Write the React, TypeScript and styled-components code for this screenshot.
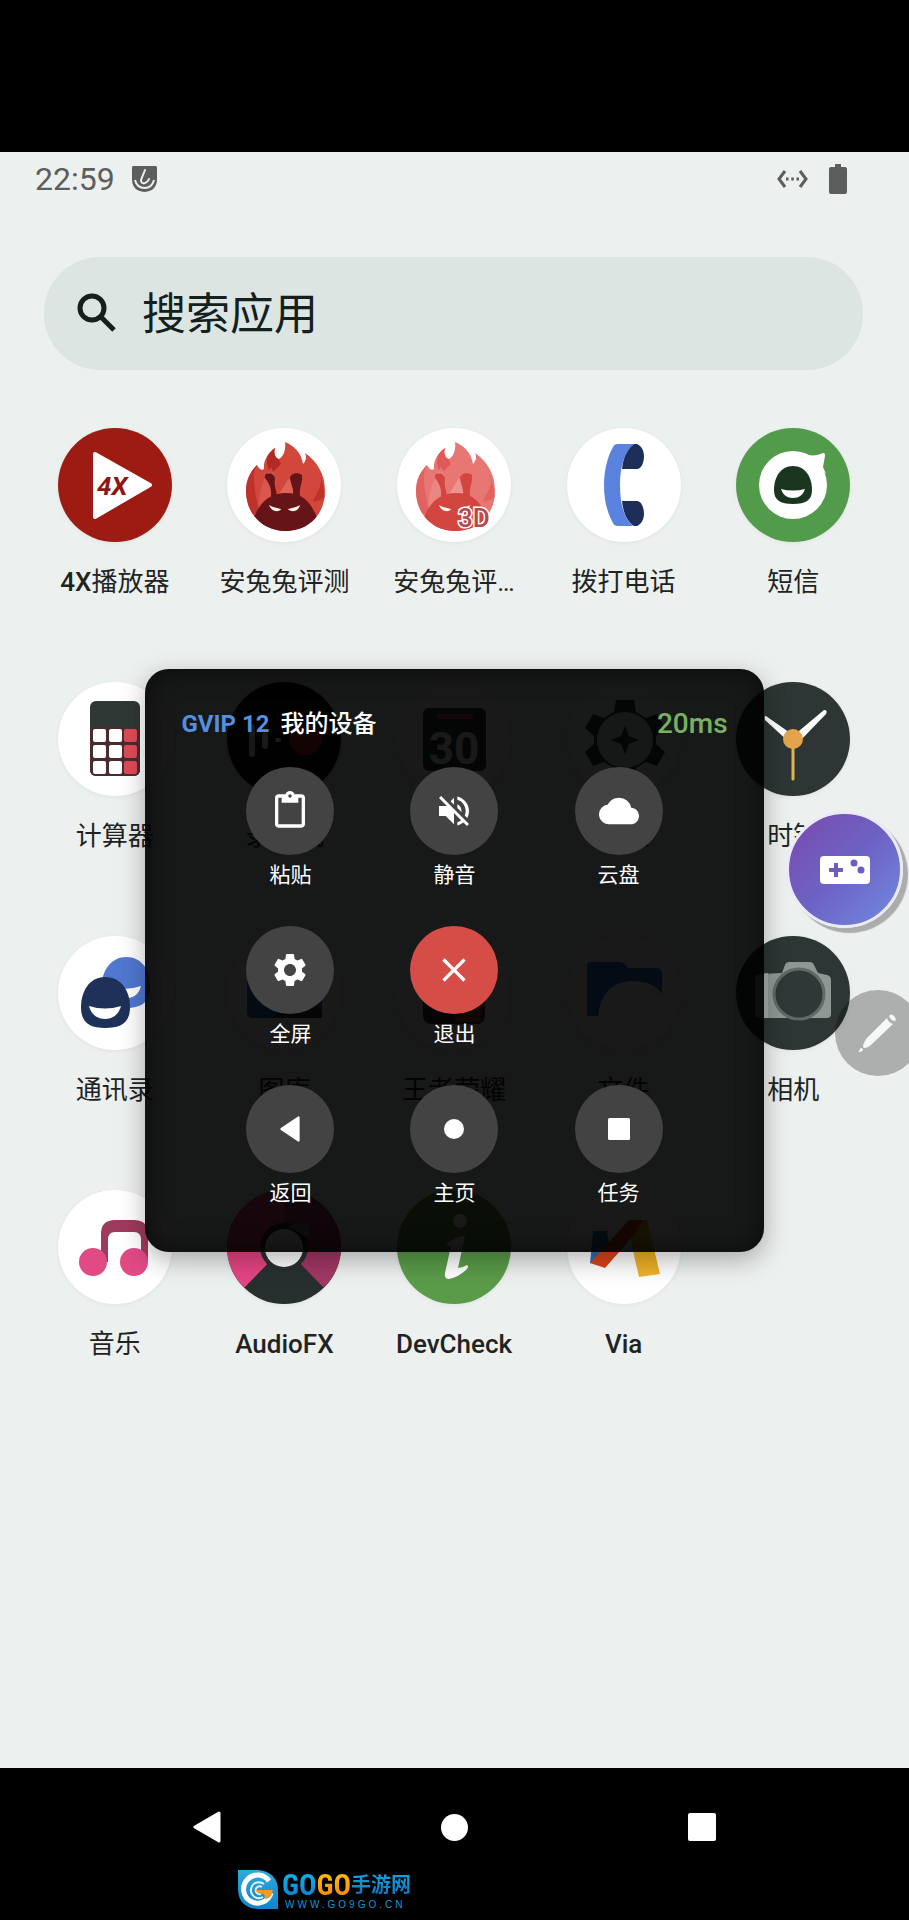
import React from "react";
import styled, { createGlobalStyle } from "styled-components";
import {
  MdClose,
  MdCloud,
  MdContentPaste,
  MdSettings,
  MdVolumeOff,
} from "react-icons/md";

const GlobalStyle = createGlobalStyle`
  * { box-sizing: border-box; }
  body {
    margin: 0;
    background: #000;
    font-family: Roboto, "Noto Sans CJK SC", sans-serif;
  }
  button {
    padding: 0;
    border: 0;
    background: none;
    color: inherit;
    font: inherit;
    cursor: pointer;
  }
  svg { display: block; }
`;

const Page = styled.div`
  position: relative;
  display: flex;
  flex-direction: column;
  min-height: 100vh;
  overflow: hidden;
  background: #000;
`;

const Screen = styled.main`
  flex: 1;
  margin-top: 152px;
  padding-bottom: 80px;
  background: #ecf0ef;
  color: #1f2423;
`;

const StatusBar = styled.header`
  display: flex;
  align-items: center;
  justify-content: space-between;
  height: 54px;
  padding: 0 62px 0 35px;
  color: #5c5e5d;
`;

const StatusGroup = styled.div<{ $gap: number }>`
  display: flex;
  align-items: center;
  gap: ${(p) => p.$gap}px;
`;

const Time = styled.time`
  font-size: 32px;
  line-height: 40px;
`;

const SearchBar = styled.label`
  display: flex;
  align-items: center;
  gap: 20px;
  height: 113px;
  margin: 51px 46px 0 44px;
  padding: 0 40px 0 26px;
  border-radius: 56px;
  background: #dce5e2;
  color: #14201d;
`;

const SearchInput = styled.input`
  flex: 1;
  min-width: 0;
  padding: 3px 0 0;
  border: 0;
  outline: 0;
  background: none;
  color: inherit;
  font: inherit;
  font-size: 44px;
  line-height: 60px;
  &::placeholder {
    color: inherit;
    opacity: 1;
  }
`;

const AppGrid = styled.section`
  display: grid;
  grid-template-columns: repeat(5, 1fr);
  row-gap: 84px;
  margin: 58px 31px 0 30px;
`;

const AppButton = styled.button`
  display: flex;
  flex-direction: column;
  align-items: center;
  gap: 24px;
`;

const AppIcon = styled.span<{ $color: string }>`
  width: 114px;
  height: 114px;
  overflow: hidden;
  border-radius: 50%;
  background: ${(p) => p.$color};
  box-shadow: 0 1px 4px rgba(0, 0, 0, 0.06);
`;

const AppLabel = styled.span`
  font-size: 26px;
  line-height: 32px;
  white-space: nowrap;
`;

const Latin = styled.span`
  font-weight: 500;
`;

const Footer = styled.footer`
  display: flex;
  flex-direction: column;
  height: 152px;
  padding: 16px 83px 10px;
`;

const NavBar = styled.nav`
  display: grid;
  grid-template-columns: repeat(3, 1fr);
  height: 86px;
  color: #fff;
`;

const NavButton = styled.button`
  display: grid;
  place-items: center;
`;

const Brand = styled.a`
  display: flex;
  align-items: center;
  align-self: flex-start;
  gap: 4px;
  height: 40px;
  margin-left: 155px;
  text-decoration: none;
`;

const BrandText = styled.span`
  display: flex;
  flex-direction: column;
`;

const BrandName = styled.span`
  display: flex;
  align-items: center;
  height: 29px;
`;

const BrandWord = styled.span<{ $from: string; $to: string; $size: number }>`
  background: linear-gradient(${(p) => p.$from}, ${(p) => p.$to});
  background-clip: text;
  -webkit-background-clip: text;
  color: transparent;
  font-family: "Liberation Sans Narrow", "Roboto Condensed", "DejaVu Sans Condensed", "Noto Sans CJK SC", sans-serif;
  font-size: ${(p) => p.$size}px;
  font-weight: 700;
  line-height: 29px;
`;

const BrandUrl = styled.span`
  padding-left: 3px;
  color: #1597d2;
  font-family: "Liberation Sans", sans-serif;
  font-size: 10px;
  line-height: 10px;
  letter-spacing: 3px;
`;

const Overlay = styled.div`
  position: absolute;
  inset: 0;
  display: grid;
  place-items: center;
  pointer-events: none;
`;

const Panel = styled.section`
  width: 68%;
  padding: 40px 36px 44px;
  border-radius: 24px;
  background: rgba(0, 0, 0, 0.9);
  box-shadow: 0 8px 26px rgba(0, 0, 0, 0.3), inset 0 0 26px rgba(0, 0, 0, 0.6);
  color: #fff;
  pointer-events: auto;
`;

const PanelHeader = styled.header`
  display: flex;
  align-items: center;
  justify-content: space-between;
  margin-bottom: 28px;
  line-height: 30px;
`;

const PanelTitle = styled.h1`
  display: flex;
  gap: 11px;
  margin: 0;
  font-size: 24px;
  font-weight: 700;
  line-height: 30px;
`;

const Plan = styled.span`
  color: #568fe0;
`;

const DeviceName = styled.span`
  font-weight: 500;
`;

const Latency = styled.span`
  color: #77b161;
  font-size: 28px;
  font-weight: 500;
`;

const ControlGrid = styled.div`
  display: grid;
  grid-template-columns: repeat(3, 1fr);
  row-gap: 36px;
  margin: 0 27px;
`;

const ControlRow = styled.div`
  display: grid;
  grid-column: 1 / -1;
  grid-template-columns: subgrid;
`;

const Control = styled.button`
  display: flex;
  flex-direction: column;
  align-items: center;
  gap: 5px;
  font-size: 21px;
  line-height: 30px;
`;

const ControlIcon = styled.span<{ $danger?: boolean }>`
  display: grid;
  place-items: center;
  width: 88px;
  height: 88px;
  border-radius: 50%;
  background: ${(p) => (p.$danger ? "#d64c46" : "#434343")};
`;

const GameButton = styled.button`
  position: absolute;
  top: 811px;
  right: 6px;
  display: grid;
  place-items: center;
  width: 117px;
  height: 117px;
  border: 3px solid #ebeafb;
  border-radius: 50%;
  background: linear-gradient(135deg, #774db0 10%, #6e62c4 50%, #7089df 95%);
  background-origin: border-box;
  box-shadow: 5px 5px 1px #aaadac;
`;

const EditButton = styled.button`
  position: absolute;
  top: 990px;
  right: -12px;
  display: grid;
  place-items: center;
  width: 86px;
  height: 86px;
  border-radius: 50%;
  background: rgba(0, 0, 0, 0.27);
`;

const DARK = "#2d3634";

const Art = ({ children }: { children?: React.ReactNode }) => (
  <svg width="114" height="114" viewBox="0 0 114 114" aria-hidden="true">
    {children}
  </svg>
);

const Rabbit = ({ light }: { light?: boolean }) => {
  const [flame, shade, glow, head, id] = light
    ? ["#e87672", "#e05a59", "#ee9391", "#d3453f", "rabbit-light"]
    : ["#d2463b", "#b32a25", "#e0635a", "#651417", "rabbit-dark"];
  const body =
    "M19 63C19 51 24 43 30 37C32 41 35 43 37 41C36 32 42 24 48 20C46 26 49 31 52 31C57 28 59 21 58 14C67 18 74 24 76 36C79 33 80 29 78 25C91 34 98 47 98 63C98 86 82 103 58 103C36 103 19 86 19 63Z";
  return (
    <Art>
      <clipPath id={id}>
        <path d={body} />
      </clipPath>
      <path d={body} fill={flame} />
      <g clipPath={`url(#${id})`}>
        <path d="M30 37C24 48 28 62 32 84L19 90V40Z" fill={shade} opacity="0.7" />
        <path d="M48 18C36 30 40 38 44 46L54 36L50 28Z" fill={shade} />
        <path d="M32 84C30 66 36 52 44 39C50 50 50 60 44 70Z" fill={glow} opacity="0.55" />
        <path d="M62 50L52 66H70Z" fill={glow} />
        <path d="M94 46C96 60 88 66 86 74L98 70Z" fill={shade} opacity="0.7" />
        <path d="M38 47C42 44 48 46 48 51C47 57 49 62 50 68H44C45 59 41 54 38 50Z" fill={head} />
        <path d="M75 47C71 44 64 45 63 50C64 57 67 61 66 68H73C72 59 76 54 75 47Z" fill={head} />
        <path d="M26 92C32 75 42 65 59 65C76 65 84 74 91 92L80 106H34Z" fill={head} />
      </g>
      <path d="M42 77C47 80 51 80 54 81C53 84 45 85 42 77Z" fill="#fff3e8" />
      <path d="M73 77C68 80 64 80 61 81C63 84 71 85 73 77Z" fill="#fff3e8" />
      {light && (
        <text
          x="61"
          y="99"
          fontSize="26"
          fontWeight="500"
          fill="#b54a4c"
          stroke="#fff"
          strokeWidth="3"
          paintOrder="stroke"
        >
          3D
        </text>
      )}
    </Art>
  );
};

const PlayerArt = (
  <Art>
    <path d="M37 26L92 57L37 89Z" fill="#fff" stroke="#fff" strokeWidth="4" strokeLinejoin="round" />
    <text x="39" y="67" fontSize="26" fontWeight="700" fontStyle="italic" fill="#8e1712">
      4X
    </text>
  </Art>
);

const PhoneArt = (
  <Art>
    <path d="M67 16H70C75 18 77 24 77 28C77 35 74 41 70 41H55C56 30 60 20 67 16Z" fill="#1d2f59" />
    <path d="M67 98H70C75 96 77 90 77 86C77 79 74 73 70 73H55C56 84 60 94 67 98Z" fill="#1d2f59" />
    <path
      d="M51 16H67C58 23 53 38 53 57C53 76 57 90 66 98H51C48 98 47 97 46 95C40 84 37 72 37 57C37 43 40 30 46 19C47 17 48 16 51 16Z"
      fill="#5a82df"
    />
  </Art>
);

const MessageArt = (
  <Art>
    <circle cx="57" cy="57" r="34" fill="#fff" />
    <path d="M72 27C78 28 82 27 87 25C89 25 89 26 89 28L87 39L90 46Z" fill="#fff" />
    <path d="M57 38C70 38 76 50 76 62C76 72 70 76 57 76C44 76 38 72 38 62C38 50 44 38 57 38Z" fill="#1b3620" />
    <path d="M45 61Q57 64 69 61C67 67 63 70 57 70C51 70 47 67 45 61Z" fill="#fff" />
  </Art>
);

const CalculatorArt = (
  <Art>
    <rect x="32" y="19" width="50" height="75" rx="6" fill="#303836" />
    <path d="M32 45H82V88A6 6 0 0 1 76 94H38A6 6 0 0 1 32 88Z" fill="#4a2c30" />
    {[47, 63, 79].map((y) =>
      [35, 51, 66].map((x) => (
        <rect key={`${x}-${y}`} x={x} y={y} width="13" height="13" rx="2" fill={x === 66 ? "#de4b57" : "#fff"} />
      )),
    )}
  </Art>
);

const RecorderArt = (
  <Art>
    <rect x="22" y="42" width="6" height="33" rx="3" fill="#fff" />
    <rect x="35" y="50" width="6" height="17" rx="3" fill="#fff" />
    <rect x="48" y="56" width="6" height="4" rx="2" fill="#fff" />
    <circle cx="79" cy="57" r="16" fill="#c32c22" />
  </Art>
);

const CalendarArt = (
  <Art>
    <rect x="26" y="26" width="63" height="63" rx="6" fill={DARK} />
    <rect x="40" y="32" width="36" height="5" fill="#d5454c" />
    <text x="57" y="82" textAnchor="middle" fontSize="44" fontWeight="700" fill="#fff">
      30
    </text>
  </Art>
);

const GearArt = (
  <Art>
    <path
      d="M49 18H67L69 30L79 36L90 32L98 46L89 54V62L98 70L90 84L79 80L69 86L67 98H49L47 86L37 80L26 84L18 70L27 62V54L18 46L26 32L37 36L47 30Z"
      fill="#1e3d35"
    />
    <circle cx="58" cy="58" r="28" fill="#ddebe6" />
    <path d="M58 44L62 54L72 58L62 62L58 72L54 62L44 58L54 54Z" fill={DARK} />
  </Art>
);

const ClockArt = (
  <Art>
    <path d="M30 34L57 53L53 60L29 38Q28 34 30 34Z" fill="#fff" />
    <path d="M88 28Q92 28 90 32L63 60L57 54Z" fill="#fff" />
    <path d="M57 64V97" stroke="#dcb54d" strokeWidth="3" strokeLinecap="round" />
    <circle cx="57" cy="57" r="10" fill="#e4a44b" />
  </Art>
);

const ContactsArt = (
  <Art>
    <path d="M68 21C84 21 92 34 92 50C92 66 84 72 68 72C52 72 44 62 44 48C44 34 54 21 68 21Z" fill="#5078d0" />
    <path d="M60 52Q72 54 83 50C81 57 78 61 70 62Z" fill="#fff" />
    <path d="M47 41C64 41 72 56 72 71C72 86 64 92 47 92C31 92 23 86 23 71C23 56 31 41 47 41Z" fill="#1d3159" />
    <path d="M31 70Q47 75 63 70C61 78 55 83 47 83C39 83 33 78 31 70Z" fill="#fff" />
  </Art>
);

const GalleryArt = (
  <Art>
    <rect x="20" y="30" width="75" height="52" rx="5" fill="#2b6ec0" />
    <path d="M45 82L70 52L95 75V82Z" fill={DARK} />
  </Art>
);

const GameArt = (
  <Art>
    <rect x="26" y="26" width="62" height="62" rx="8" fill="#402a2a" />
    <rect x="58" y="70" width="26" height="16" fill="#a73c30" />
  </Art>
);

const FolderArt = (
  <Art>
    <path d="M20 28A6 6 0 0 1 26 26H52Q58 26 61 32H90A5 5 0 0 1 95 37V80H20Z" fill="#2f70c8" />
    <path d="M31 85C31 60 45 45 65 45C80 45 90 50 95 58V90H31Z" fill="#fff" />
  </Art>
);

const CameraArt = (
  <Art>
    <path
      d="M24 38L46 37L49 29Q50 26 53 26H74Q77 26 78 29L82 37L91 39Q95 40 95 44V78Q95 82 91 82H24Q19 82 19 77V43Q19 39 24 38Z"
      fill="#8f9795"
    />
    <path d="M24 38L32 37V82H24Q19 82 19 77V43Q19 39 24 38Z" fill="#a5acaa" />
    <circle cx="63" cy="58" r="25" fill="#2f3836" stroke="#626a68" strokeWidth="3" />
  </Art>
);

const MusicArt = (
  <Art>
    <path d="M43 72V44Q43 30 57 30H76Q90 30 90 44V72H83V50Q83 42 76 42H57Q50 42 50 50V72Z" fill="#9f3a5f" />
    <circle cx="35" cy="72" r="14" fill="#e14a85" />
    <circle cx="76" cy="72" r="14" fill="#e14a85" />
  </Art>
);

const AudioArt = (
  <Art>
    <path d="M57 57L17 98A57 57 0 0 1 57 0Z" fill="#e64583" />
    <path d="M57 57L97 98A57 57 0 0 0 57 0Z" fill="#a23765" />
    <circle cx="57" cy="57" r="24" fill="#28302f" />
    <path d="M60 36L82 32V48Z" fill="#7a7a7a" />
    <circle cx="57" cy="58" r="19" fill="#fff" />
  </Art>
);

const InfoArt = (
  <Art>
    <circle cx="63" cy="31" r="7" fill="#fff" />
    <path d="M49 54Q60 46 68 46L61 78Q65 78 70 75Q72 76 70 79Q62 87 52 89Q47 89 48 83L54 56Z" fill="#fff" />
  </Art>
);

const ViaArt = (
  <Art>
    <path d="M26 41H40L42 53L23 74Z" fill="#2872b5" />
    <path d="M62 30H80L93 84L72 87L64 52Z" fill="#efb229" />
    <path d="M62 30H76L68 44L38 78L23 73Z" fill="#dc4419" />
  </Art>
);

const apps: { name: React.ReactNode; color: string; art: React.ReactNode }[] = [
  { name: <><Latin>4X</Latin>播放器</>, color: "#9d1b12", art: PlayerArt },
  { name: "安兔兔评测", color: "#fff", art: <Rabbit /> },
  { name: "安兔兔评…", color: "#fff", art: <Rabbit light /> },
  { name: "拨打电话", color: "#fff", art: PhoneArt },
  { name: "短信", color: "#519b4a", art: MessageArt },
  { name: "计算器", color: "#fff", art: CalculatorArt },
  { name: "录音机", color: "#1d1010", art: RecorderArt },
  { name: "日历", color: "#fff", art: CalendarArt },
  { name: "设置", color: "#f4f8f7", art: GearArt },
  { name: "时钟", color: DARK, art: ClockArt },
  { name: "通讯录", color: "#fff", art: ContactsArt },
  { name: "图库", color: "#fff", art: GalleryArt },
  { name: "王者荣耀", color: "#fff", art: GameArt },
  { name: "文件", color: "#fff", art: FolderArt },
  { name: "相机", color: DARK, art: CameraArt },
  { name: "音乐", color: "#fff", art: MusicArt },
  { name: <Latin>AudioFX</Latin>, color: "#28302f", art: AudioArt },
  { name: <Latin>DevCheck</Latin>, color: "#5a9b49", art: InfoArt },
  { name: <Latin>Via</Latin>, color: "#fff", art: ViaArt },
];

const BackGlyph = ({ width, height }: { width: number; height: number }) => (
  <svg width={width} height={height} viewBox="0 0 28 32" preserveAspectRatio="none" aria-hidden="true">
    <path d="M2 16L26 2V30Z" fill="currentColor" stroke="currentColor" strokeWidth="3" strokeLinejoin="round" />
  </svg>
);

const HomeGlyph = ({ size }: { size: number }) => (
  <svg width={size} height={size} viewBox="0 0 20 20" aria-hidden="true">
    <circle cx="10" cy="10" r="10" fill="currentColor" />
  </svg>
);

const TasksGlyph = ({ size }: { size: number }) => (
  <svg width={size} height={size} viewBox="0 0 22 22" aria-hidden="true">
    <rect width="22" height="22" rx="1.5" fill="currentColor" />
  </svg>
);

const controls: { name: string; icon: React.ReactNode; danger?: boolean }[][] = [
  [
    { name: "粘贴", icon: <MdContentPaste size={40} /> },
    { name: "静音", icon: <MdVolumeOff size={40} /> },
    { name: "云盘", icon: <MdCloud size={40} /> },
  ],
  [
    { name: "全屏", icon: <MdSettings size={40} /> },
    { name: "退出", icon: <MdClose size={40} />, danger: true },
  ],
  [
    { name: "返回", icon: <BackGlyph width={20} height={26} /> },
    { name: "主页", icon: <HomeGlyph size={20} /> },
    { name: "任务", icon: <TasksGlyph size={22} /> },
  ],
];

export default function App() {
  return (
    <Page lang="zh-CN">
      <GlobalStyle />
      <Screen>
        <StatusBar>
          <StatusGroup $gap={17}>
            <Time>22:59</Time>
            <svg width="25" height="26" viewBox="0 0 25 26" aria-hidden="true">
              <path d="M1 0H24Q25 0 25 2V13Q25 25 12.500 26Q0 25 0 13V2Q0 0 1 0Z" fill="currentColor" />
              <path d="M3 14Q5 22 12.500 22Q20 22 22 14" fill="none" stroke="#ecf0ef" strokeWidth="2" />
              <path d="M13 4L9 14Q9 18 13 17Q16 16 17 13" fill="none" stroke="#ecf0ef" strokeWidth="2" strokeLinecap="round" />
            </svg>
          </StatusGroup>
          <StatusGroup $gap={21}>
            <svg width="31" height="20" viewBox="0 0 31 20" aria-hidden="true">
              <path d="M8 2L2 10L8 18M23 2L29 10L23 18" fill="none" stroke="currentColor" strokeWidth="3" />
              <path d="M9 10H11.500M14.300 10H16.800M19.500 10H22" stroke="currentColor" strokeWidth="3" />
            </svg>
            <svg width="18" height="30" viewBox="0 0 18 30" aria-hidden="true">
              <path d="M6 0H12V3H16Q18 3 18 5V28Q18 30 16 30H2Q0 30 0 28V5Q0 3 2 3H6Z" fill="currentColor" />
            </svg>
          </StatusGroup>
        </StatusBar>

        <SearchBar>
          <svg width="52" height="52" viewBox="0 0 52 52" aria-hidden="true">
            <circle cx="22" cy="20" r="12" fill="none" stroke="currentColor" strokeWidth="5" />
            <path d="M30 28L44 42" stroke="currentColor" strokeWidth="5" />
          </svg>
          <SearchInput type="text" placeholder="搜索应用" aria-label="搜索应用" />
        </SearchBar>

        <AppGrid>
          {apps.map((app, index) => (
            <AppButton key={index} type="button">
              <AppIcon $color={app.color}>{app.art}</AppIcon>
              <AppLabel>{app.name}</AppLabel>
            </AppButton>
          ))}
        </AppGrid>
      </Screen>

      <Footer>
        <NavBar>
          <NavButton type="button" aria-label="返回">
            <BackGlyph width={28} height={32} />
          </NavButton>
          <NavButton type="button" aria-label="主页">
            <HomeGlyph size={27} />
          </NavButton>
          <NavButton type="button" aria-label="任务">
            <TasksGlyph size={28} />
          </NavButton>
        </NavBar>
        <Brand href="#">
          <svg width="40" height="40" viewBox="0 0 40 40" aria-hidden="true">
            <defs>
              <linearGradient id="mark" x1="0" y1="0" x2="0" y2="1">
                <stop offset="0" stopColor="#2fa9dd" />
                <stop offset="1" stopColor="#1284cb" />
              </linearGradient>
            </defs>
            <path d="M0 0H20Q40 2 40 21V39H20Q1 38 0 20Z" fill="url(#mark)" />
            <path d="M31 11A14 14 0 1 0 33 23" fill="none" stroke="#fff" strokeWidth="5" />
            <path d="M26 14A8 8 0 1 0 25 27" fill="none" stroke="#e4f4fc" strokeWidth="2" />
            <path d="M24 17A4 4 0 1 0 23 24" fill="none" stroke="#e4f4fc" strokeWidth="2" />
            <path d="M17 20H35Q33 29 27 29L26 24Q20 24 17 20Z" fill="#f49a1f" />
          </svg>
          <BrandText>
            <BrandName>
              <BrandWord $from="#12b8ee" $to="#0a7ccb" $size={29}>GO</BrandWord>
              <BrandWord $from="#fdc10c" $to="#f7830c" $size={29}>GO</BrandWord>
              <BrandWord $from="#12a8e4" $to="#0a6fc0" $size={20}>手游网</BrandWord>
            </BrandName>
            <BrandUrl>WWW.GO9GO.CN</BrandUrl>
          </BrandText>
        </Brand>
      </Footer>

      <Overlay>
        <Panel>
          <PanelHeader>
            <PanelTitle>
              <Plan>GVIP 12</Plan>
              <DeviceName>我的设备</DeviceName>
            </PanelTitle>
            <Latency>20ms</Latency>
          </PanelHeader>
          <ControlGrid>
            {controls.map((row, index) => (
              <ControlRow key={index}>
                {row.map((control) => (
                  <Control key={control.name} type="button">
                    <ControlIcon $danger={control.danger}>{control.icon}</ControlIcon>
                    {control.name}
                  </Control>
                ))}
              </ControlRow>
            ))}
          </ControlGrid>
        </Panel>
      </Overlay>

      <GameButton type="button" aria-label="手柄">
        <svg width="50" height="28" viewBox="0 0 50 28" aria-hidden="true">
          <rect width="50" height="28" rx="4" fill="#fff" />
          <path d="M16 7V21M9 14H23" stroke="#6c5fc0" strokeWidth="4" />
          <circle cx="34" cy="7" r="3.500" fill="#6c5fc0" />
          <circle cx="41" cy="14" r="3.500" fill="#6c5fc0" />
        </svg>
      </GameButton>
      <EditButton type="button" aria-label="编辑">
        <svg width="40" height="40" viewBox="0 0 40 40" aria-hidden="true">
          <path d="M31 3Q33 0 36 3Q39 6 37 8Q33 8 31 3Z" fill="#f6f8f7" />
          <path d="M29 5Q30 9 35 11L14 31Q10 35 6 35Q4 34 6 30Q7 27 9 25Z" fill="#f6f8f7" />
          <path d="M3 35L5 37L1 39Z" fill="#f6f8f7" stroke="#f6f8f7" strokeLinejoin="round" />
        </svg>
      </EditButton>
    </Page>
  );
}
